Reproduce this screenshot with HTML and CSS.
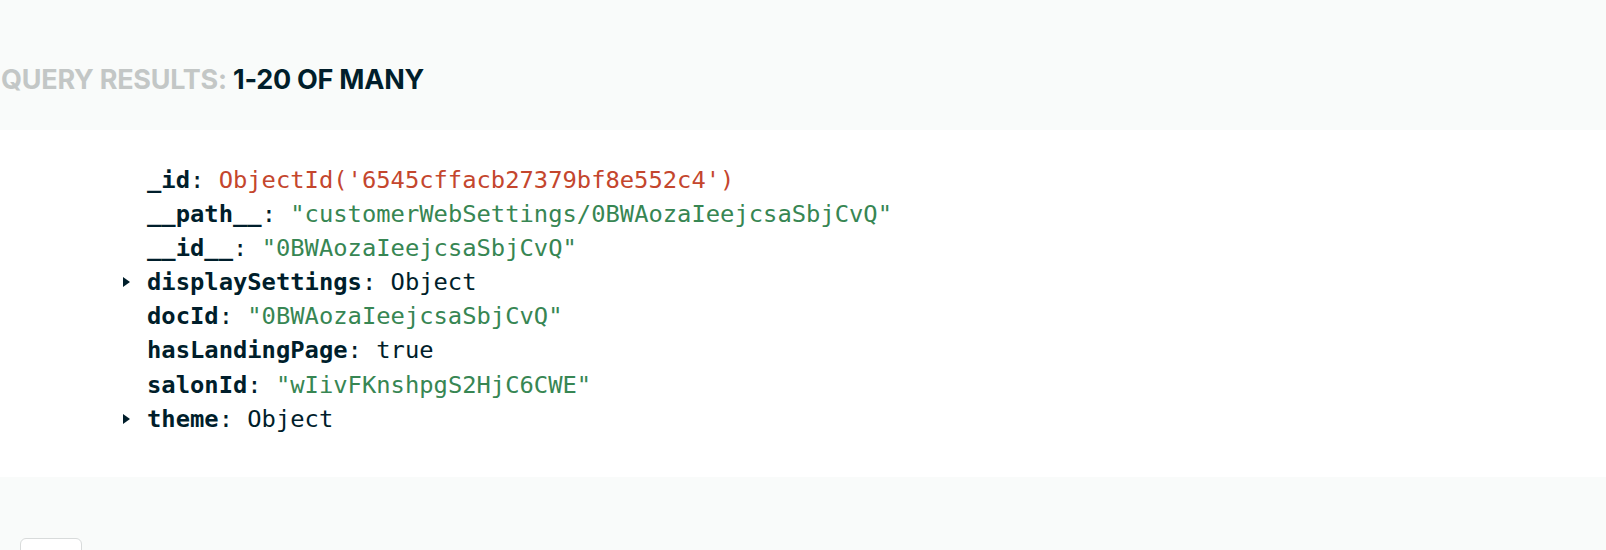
FILE: index.html
```html
<!DOCTYPE html>
<html>
<head>
<meta charset="utf-8">
<link rel="stylesheet" href="styles.css">
</head>
<body>
<div class="page">
  <header class="results-header">
    <span class="label">QUERY RESULTS:</span> <span class="count">1-20 OF MANY</span>
  </header>
  <section class="doc-panel">
    <div class="doc">
      <div class="row"><span class="caret-slot"></span><span class="key">_id</span><span class="colon">: </span><span class="val oid">ObjectId('6545cffacb27379bf8e552c4')</span></div>
      <div class="row"><span class="caret-slot"></span><span class="key">__path__</span><span class="colon">: </span><span class="val str">"customerWebSettings/0BWAozaIeejcsaSbjCvQ"</span></div>
      <div class="row"><span class="caret-slot"></span><span class="key">__id__</span><span class="colon">: </span><span class="val str">"0BWAozaIeejcsaSbjCvQ"</span></div>
      <div class="row"><span class="caret-slot"><span class="caret"></span></span><span class="key">displaySettings</span><span class="colon">: </span><span class="val plain">Object</span></div>
      <div class="row"><span class="caret-slot"></span><span class="key">docId</span><span class="colon">: </span><span class="val str">"0BWAozaIeejcsaSbjCvQ"</span></div>
      <div class="row"><span class="caret-slot"></span><span class="key">hasLandingPage</span><span class="colon">: </span><span class="val plain">true</span></div>
      <div class="row"><span class="caret-slot"></span><span class="key">salonId</span><span class="colon">: </span><span class="val str">"wIivFKnshpgS2HjC6CWE"</span></div>
      <div class="row"><span class="caret-slot"><span class="caret"></span></span><span class="key">theme</span><span class="colon">: </span><span class="val plain">Object</span></div>
    </div>
  </section>
  <div class="footer-area">
    <div class="footer-box"></div>
  </div>
</div>
</body>
</html>
```

FILE: styles.css
```css
html, body {
  margin: 0;
  padding: 0;
  background: #f9fbfa;
  overflow: hidden;
}

.page {
  width: 1606px;
}

.results-header {
  box-sizing: border-box;
  height: 130px;
  padding: 62px 0 0 1px;
  font-family: Inter, "Noto Sans", sans-serif;
  font-weight: 700;
  font-size: 27px;
  line-height: 36px;
  letter-spacing: -0.25px;
  white-space: nowrap;
}

.results-header .label {
  color: #c3c7c6;
}

.results-header .count {
  color: #001e2b;
}

.doc-panel {
  box-sizing: border-box;
  height: 347px;
  background: #ffffff;
  padding: 33px 0 0 123px;
}

.doc {
  font-family: "DejaVu Sans Mono", "Liberation Mono", monospace;
  font-size: 23.8px;
  line-height: 34.1px;
  color: #001e2b;
}

.row {
  display: flex;
  align-items: center;
  white-space: pre;
}

.caret-slot {
  width: 24px;
  display: flex;
  align-items: center;
}

.caret {
  width: 0;
  height: 0;
  border-left: 7px solid #001e2b;
  border-top: 5px solid transparent;
  border-bottom: 5px solid transparent;
}

.key {
  font-weight: 700;
}

.colon {
  font-weight: 400;
}

.oid {
  color: #c4462d;
}

.str {
  color: #378653;
}

.plain {
  color: #001e2b;
}

.footer-area {
  padding: 61px 0 0 20px;
}

.footer-box {
  box-sizing: border-box;
  width: 62px;
  height: 40px;
  background: #ffffff;
  border: 1.5px solid #d8dbdb;
  border-radius: 6px;
}
```
